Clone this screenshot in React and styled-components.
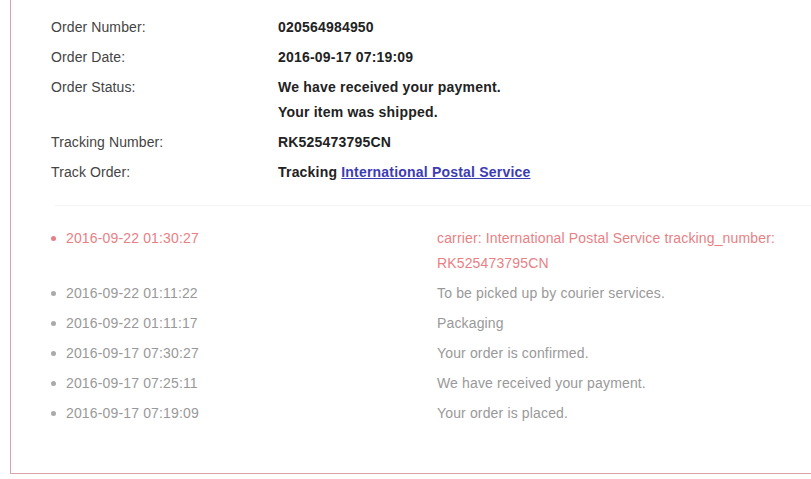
import styled, { createGlobalStyle } from "styled-components";

const GlobalStyle = createGlobalStyle`
    body {
        margin: 0;
        background: #fff;
        font-family: Arial, "Liberation Sans", sans-serif;
    }
`

const details = [
    { label: "Order Number:", value: ["020564984950"] },
    { label: "Order Date:", value: ["2016-09-17 07:19:09"] },
    { label: "Order Status:", value: ["We have received your payment.", "Your item was shipped."] },
    { label: "Tracking Number:", value: ["RK525473795CN"] },
]

const events = [
    { time: "2016-09-22 01:30:27", text: "carrier: International Postal Service tracking_number: RK525473795CN", latest: true },
    { time: "2016-09-22 01:11:22", text: "To be picked up by courier services." },
    { time: "2016-09-22 01:11:17", text: "Packaging" },
    { time: "2016-09-17 07:30:27", text: "Your order is confirmed." },
    { time: "2016-09-17 07:25:11", text: "We have received your payment." },
    { time: "2016-09-17 07:19:09", text: "Your order is placed." },
]

export default function App() {
    return (
        <>
            <GlobalStyle />
            <Panel>
                <DetailList>
                    {details.map((d) => (
                        <DetailRow key={d.label}>
                            <Label>{d.label}</Label>
                            <Value>
                                {d.value.map((line) => (
                                    <div key={line}>{line}</div>
                                ))}
                            </Value>
                        </DetailRow>
                    ))}
                    <DetailRow>
                        <Label>Track Order:</Label>
                        <Value>
                            Tracking <TrackLink href="#">International Postal Service</TrackLink>
                        </Value>
                    </DetailRow>
                </DetailList>

                <Divider />

                <Timeline>
                    {events.map((e) => (
                        <Event key={e.time} $latest={e.latest}>
                            <Time $latest={e.latest}>{e.time}</Time>
                            <Desc>{e.text}</Desc>
                        </Event>
                    ))}
                </Timeline>
            </Panel>
        </>
    )
}

const Panel = styled.section`
    margin-left: 10px;
    height: 474px;
    box-sizing: border-box;
    border-left: 1px solid #dba4ab;
    border-bottom: 1px solid #dba4ab;
    padding: 12px 0 0 40px;
`

const DetailList = styled.div`
    display: flex;
    flex-direction: column;
`

const DetailRow = styled.div`
    display: grid;
    grid-template-columns: 227px 1fr;
    padding: 2.5px 0;
    line-height: 25px;
    font-size: 14px;
    letter-spacing: 0.1px;
`

const Label = styled.div`
    color: #444;
`

const Value = styled.div`
    color: #222;
    font-weight: bold;
    letter-spacing: 0.2px;
`

const TrackLink = styled.a`
    color: #3c3cb4;
    text-decoration: underline;
`

const Divider = styled.hr`
    margin: 18px 0 17px 4px;
    border: 0;
    border-top: 1px solid #f3f3f3;
`

const Timeline = styled.ul`
    list-style: none;
    margin: 0;
    padding: 0;
`

const Event = styled.li`
    display: grid;
    grid-template-columns: 386px 370px;
    padding: 2.5px 0;
    line-height: 25px;
    font-size: 14px;
    letter-spacing: 0.15px;
    color: ${(p) => (p.$latest ? "#e97f85" : "#999")};
`

const Time = styled.span`
    display: flex;
    align-items: center;
    gap: 10px;
    align-self: start;

    &::before {
        content: "";
        width: 5px;
        height: 5px;
        border-radius: 50%;
        background: ${(p) => (p.$latest ? "#e97f85" : "#aaa")};
    }
`

const Desc = styled.span``
